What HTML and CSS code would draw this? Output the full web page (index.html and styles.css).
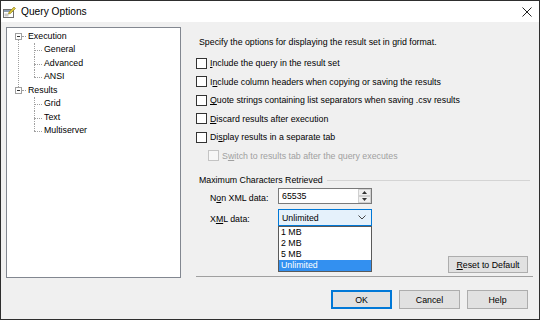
FILE: index.html
```html
<!DOCTYPE html>
<html lang="en">
<head>
  <meta charset="UTF-8">
  <title>Query Options</title>
  <link rel="stylesheet" href="styles.css">
</head>
<body>
  <div class="window">
    <div class="titlebar">
      <svg class="app-icon" width="13" height="13" viewBox="0 0 13 13">
        <rect x="0.5" y="3.5" width="10" height="8" fill="#fff" stroke="#6f6f6f"/>
        <rect x="1" y="4" width="9" height="2" fill="#8a9bb0"/>
        <rect x="1.5" y="7.5" width="4" height="3" fill="#c9c9c9"/>
        <polygon points="6,6 11,1 12.5,2.5 7.5,7.5 5.5,8" fill="#d8c43a" stroke="#8a7a1c" stroke-width="0.6"/>
      </svg>
      <span class="title">Query Options</span>
      <svg class="close" width="10" height="10" viewBox="0 0 10 10">
        <path d="M0.5 0.5 L9.5 9.5 M9.5 0.5 L0.5 9.5" stroke="#222" stroke-width="1"/>
      </svg>
    </div>

    <div class="main">
      <div class="tree">
        <div class="node first">
          <div class="row"><span class="expander"></span><span class="stub"></span>Execution</div>
          <div class="children">
            <div class="leaf">General</div>
            <div class="leaf">Advanced</div>
            <div class="leaf">ANSI</div>
          </div>
        </div>
        <div class="node">
          <div class="row"><span class="expander"></span><span class="stub"></span>Results</div>
          <div class="children">
            <div class="leaf">Grid</div>
            <div class="leaf">Text</div>
            <div class="leaf">Multiserver</div>
          </div>
        </div>
      </div>

      <div class="panel">
        <div class="options">
          <div class="intro">Specify the options for displaying the result set in grid format.</div>

          <div class="check"><span class="box"></span><u>I</u>nclude the query in the result set</div>
          <div class="check"><span class="box"></span>I<u>n</u>clude column headers when copying or saving the results</div>
          <div class="check"><span class="box"></span><u>Q</u>uote strings containing list separators when saving .csv results</div>
          <div class="check"><span class="box"></span><u>D</u>iscard results after execution</div>
          <div class="check"><span class="box"></span>Di<u>s</u>play results in a separate tab</div>
          <div class="check sub disabled"><span class="box"></span>S<u>w</u>itch to results tab after the query executes</div>

          <div class="group-title"><span>Maximum Characters Retrieved</span></div>

          <div class="field">
            <label class="field-label">N<u>o</u>n XML data:</label>
            <div class="spin-input">
              <span class="value">65535</span>
              <span class="spin">
                <span class="spin-btn"><svg width="5" height="3" viewBox="0 0 5 3"><polygon points="0,3 2.5,0 5,3" fill="#333"/></svg></span>
                <span class="spin-btn"><svg width="5" height="3" viewBox="0 0 5 3"><polygon points="0,0 2.5,3 5,0" fill="#333"/></svg></span>
              </span>
            </div>
          </div>

          <div class="field">
            <label class="field-label">X<u>M</u>L data:</label>
            <div class="combo">
              <div class="combo-box">
                <span>Unlimited</span>
                <svg width="8" height="5" viewBox="0 0 8 5"><polyline points="0.5,0.5 4,4 7.5,0.5" fill="none" stroke="#444" stroke-width="1"/></svg>
              </div>
              <ul class="dropdown">
                <li>1 MB</li>
                <li>2 MB</li>
                <li>5 MB</li>
                <li class="selected">Unlimited</li>
              </ul>
            </div>
          </div>

          <div class="reset-row">
            <button class="btn reset"><u>R</u>eset to Default</button>
          </div>
        </div>
      </div>
    </div>

    <div class="footer">
      <button class="btn default">OK</button>
      <button class="btn">Cancel</button>
      <button class="btn">Help</button>
    </div>
  </div>
</body>
</html>
```

FILE: styles.css
```css
* {
  box-sizing: border-box;
}
body {
  margin: 0;
  font-family: "Liberation Sans", Arial, sans-serif;
  font-size: 8.8px;
  color: #000;
  background: #f0f0f0;
}
u {
  text-decoration-thickness: 1px;
  text-underline-offset: 1px;
}
.window {
  width: 540px;
  height: 320px;
  border: 1px solid #2e2e2e;
  background: #f0f0f0;
  display: flex;
  flex-direction: column;
}

/* title bar */
.titlebar {
  height: 21px;
  background: #fff;
  display: flex;
  align-items: center;
  padding-left: 2px;
}
.app-icon {
  margin-top: 1px;
}
.title {
  font-size: 10.2px;
  margin-left: 5px;
  flex: 1;
}
.close {
  margin-right: 7px;
}

/* main area */
.main {
  display: flex;
  height: 256px;
  padding: 5px 0 0 5px;
}
.tree {
  width: 175px;
  height: 251px;
  background: #fff;
  border: 1px solid #828790;
  padding: 1.5px 0 0 8px;
  line-height: 13.5px;
}
.node {
  position: relative;
}
.node.first::after {
  content: "";
  position: absolute;
  left: 3px;
  top: 10.25px;
  bottom: -3.25px;
  border-left: 1px dotted #a0a0a0;
}
.row {
  height: 13.5px;
  display: flex;
  align-items: center;
}
.expander {
  width: 7px;
  height: 7px;
  border: 1px solid #a0a0a0;
  position: relative;
  background: #fff;
}
.expander::after {
  content: "";
  position: absolute;
  left: 1px;
  top: 2px;
  width: 3px;
  height: 1px;
  background: #333;
}
.stub {
  width: 4px;
  margin-right: 2px;
  border-top: 1px dotted #a0a0a0;
}
.children {
  padding-left: 19px;
}
.leaf {
  position: relative;
  height: 13.5px;
  padding-left: 10px;
}
.leaf::before {
  content: "";
  position: absolute;
  left: 0;
  top: 7px;
  width: 8px;
  border-top: 1px dotted #a0a0a0;
}
.leaf::after {
  content: "";
  position: absolute;
  left: 0;
  top: 0;
  height: 100%;
  border-left: 1px dotted #a0a0a0;
}
.leaf:last-child::after {
  height: 7px;
}

/* right panel */
.panel {
  flex: 1;
  padding: 0 6px 0 15px;
}
.options {
  height: 250px;
  border-bottom: 1px solid #a0a0a0;
  display: flex;
  flex-direction: column;
  padding-top: 10px;
}
.intro {
  line-height: 11px;
  padding-left: 3px;
  margin-bottom: 6px;
}
.check {
  height: 18.5px;
  display: flex;
  align-items: center;
}
.box {
  width: 11px;
  height: 11px;
  border: 1px solid #333;
  background: #fff;
  margin-right: 3px;
}
.check.sub {
  padding-left: 12px;
}
.check.disabled {
  color: #a0a0a0;
}
.check.disabled .box {
  border-color: #c4c4c4;
  background: #f7f7f7;
}
.group-title {
  margin-top: 9px;
  height: 12px;
  display: flex;
  align-items: center;
  padding-left: 3px;
}
.group-title::after {
  content: "";
  flex: 1;
  margin: 1px 3px 0 4px;
  border-top: 1px solid #d4d4d4;
}
.field {
  display: flex;
  align-items: center;
  margin-top: 2px;
}
.field + .field {
  margin-top: 5px;
}
.field-label {
  width: 82px;
  padding-left: 14px;
  padding-top: 3px;
}
.spin-input {
  width: 94px;
  height: 16px;
  border: 1px solid #7a7a7a;
  background: #fff;
  display: flex;
  align-items: center;
  padding-left: 3px;
}
.spin-input .value {
  flex: 1;
}
.spin {
  width: 13px;
  height: 14px;
  display: flex;
  flex-direction: column;
  gap: 0;
}
.spin-btn {
  flex: 1;
  display: flex;
  align-items: center;
  justify-content: center;
  background: #f0f0f0;
  border: 1px solid #d0d0d0;
}
.combo {
  position: relative;
}
.combo-box {
  width: 94px;
  height: 17px;
  border: 1px solid #0078d7;
  background: #e5f1fb;
  display: flex;
  align-items: center;
  justify-content: space-between;
  padding: 0 5px 0 3px;
}
.dropdown {
  position: absolute;
  top: 100%;
  left: 0;
  width: 94px;
  margin: 0;
  padding: 0;
  list-style: none;
  background: #fff;
  border: 1px solid #5a5a5a;
  z-index: 2;
}
.dropdown li {
  height: 11px;
  line-height: 11px;
  padding-left: 2px;
}
.dropdown li.selected {
  background: #3390f0;
  color: #fff;
}
.reset-row {
  margin-top: auto;
  margin-bottom: 3px;
  display: flex;
  justify-content: flex-end;
  padding-right: 5px;
}

/* buttons */
.btn {
  font-family: inherit;
  font-size: 8.8px;
  color: #000;
  background: #e1e1e1;
  border: 1px solid #adadad;
  padding: 0;
  width: 61px;
  height: 19px;
}
.btn.reset {
  width: 80px;
  height: 17px;
}
.btn.default {
  border-color: #0078d7;
  box-shadow: inset 0 0 0 1px #0078d7;
}
.footer {
  display: flex;
  justify-content: flex-end;
  gap: 7px;
  padding: 12px 11px 0 0;
}
```
